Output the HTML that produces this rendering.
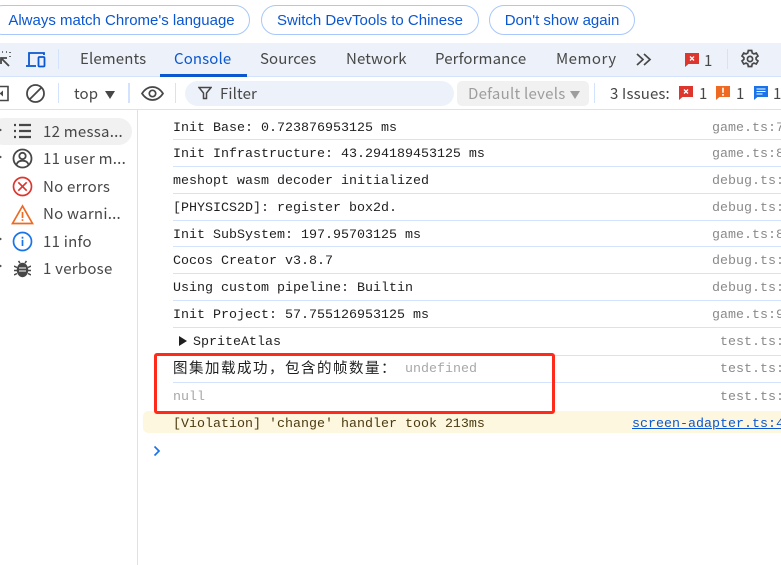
<!DOCTYPE html>
<html><head><meta charset="utf-8"><style>
html,body{margin:0;padding:0;background:#fff}
#p{position:relative;width:781px;height:565px;overflow:hidden;background:#fff;font-family:"Noto Sans CJK SC","Liberation Sans",sans-serif;color:#474747}
#p div,#p span.a,#p svg{position:absolute}
.b{box-sizing:border-box;height:30px;top:5px;border:1px solid #a8c7fa;border-radius:15px;color:#0b57d0;font:15px/29px "Liberation Sans",sans-serif;text-align:center;white-space:nowrap}
.t{top:48px;font-size:15px;line-height:21px;white-space:nowrap;color:#474747;letter-spacing:.12px}
.s{left:43px;font-size:15px;line-height:20px;white-space:nowrap;color:#474747;letter-spacing:.25px;margin-top:1px}
.m{left:173px;font:13.33px/16px "Liberation Mono",monospace;color:#1f1f1f;white-space:nowrap;margin-top:2px}
.r{font:13.33px/16px "Liberation Mono",monospace;color:#8a8a8a;white-space:nowrap;margin-top:2px}
.l{left:173px;right:0;height:1px;background:#d3e3fd}
.v{width:1px;background:#d3e3fd}
</style></head><body><div id="p">
<div class="b" style="left:-12px;width:262px;padding-left:5px">Always match Chrome's language</div>
<div class="b" style="left:261px;width:218px">Switch DevTools to Chinese</div>
<div class="b" style="left:489px;width:146px">Don't show again</div>

<div style="left:0;top:43px;width:781px;height:33px;background:#edf2fa"></div>
<div style="left:0;top:76px;width:781px;height:1px;background:#d3e3fd"></div>
<div style="left:0;top:109px;width:781px;height:1px;background:#d3e3fd"></div>
<div style="left:137px;top:110px;width:1px;height:455px;background:#d3e3fd"></div>

<svg style="left:-4px;top:50px" width="16" height="18" viewBox="0 0 16 18" fill="none" stroke="#474747" stroke-width="1.6"><path d="M2 2h1M6 2h1M10 2h1M14 2v1M14 6v1"/><path d="M13 16L6 9M5 14V8h6" stroke-width="1.8"/></svg>
<svg style="left:25px;top:51px" width="21" height="17" viewBox="0 0 21 17" fill="none" stroke="#0b57d0" stroke-width="1.8"><path d="M4 14V2h15v2"/><path d="M1 15h10"/><rect x="13.5" y="6" width="6" height="9.500" rx="1"/></svg>
<div class="v" style="left:58px;top:49px;height:20px"></div>

<div class="t" style="left:80px">Elements</div>
<div class="t" style="left:174px;color:#0b57d0">Console</div>
<div style="left:160px;top:74px;width:87px;height:3px;background:#0b57d0"></div>
<div class="t" style="left:260px">Sources</div>
<div class="t" style="left:346px">Network</div>
<div class="t" style="left:435px">Performance</div>
<div class="t" style="left:556px;letter-spacing:.5px">Memory</div>
<svg style="left:635px;top:52px" width="18" height="15" viewBox="0 0 18 15" fill="none" stroke="#474747" stroke-width="1.7"><path d="M2 2l6 5.500-6 5.500M9 2l6 5.500-6 5.500"/></svg>

<svg style="left:685px;top:53px" width="14" height="14" viewBox="0 0 14 14"><path d="M0 0h14v11H3.500L0 14z" fill="#dc362e"/><path d="M5 3.500l4 4M9 3.500l-4 4" stroke="#fff" stroke-width="1.3"/></svg>
<div class="t" style="left:704px;top:50px;color:#474747">1</div>
<div class="v" style="left:727px;top:49px;height:20px"></div>
<svg style="left:740px;top:49px" width="20" height="20" viewBox="0 0 20 20" fill="none" stroke="#474747" stroke-width="1.700"><path d="M8.300 1.500h3.400l.5 2.500 1.700.9 2.400-.9 1.700 3-1.900 1.600v1.800l1.900 1.600-1.700 3-2.400-.9-1.700.9-.5 2.500H8.300l-.5-2.500-1.700-.9-2.400.9-1.700-3 1.900-1.600V8.600L2 7l1.700-3 2.400.9 1.700-.9z"/><circle cx="10" cy="10" r="2.600"/></svg>

<svg style="left:-4px;top:85px" width="14" height="17" viewBox="0 0 14 17" fill="none" stroke="#474747" stroke-width="1.600"><path d="M0 1.500h12v14H0"/><path d="M7 5.500v6l-3.500-3z" fill="#474747" stroke="none"/></svg>
<svg style="left:25px;top:83px" width="21" height="21" viewBox="0 0 21 21" fill="none" stroke="#474747" stroke-width="1.800"><circle cx="10.500" cy="10.500" r="8.500"/><path d="M4.500 16.500l12-12"/></svg>
<div class="v" style="left:58px;top:83px;height:20px"></div>
<div class="t" style="left:74px;top:83px">top</div>
<svg style="left:105px;top:91px" width="10" height="8" viewBox="0 0 10 8"><path d="M0 0h10L5 8z" fill="#474747"/></svg>
<div class="v" style="left:128px;top:83px;height:20px;width:2px"></div>
<svg style="left:141px;top:85px" width="23" height="17" viewBox="0 0 23 17" fill="none" stroke="#474747" stroke-width="1.700"><path d="M1 8.500C4 4 7.500 2 11.500 2s7.500 2 10.500 6.500C19 13 15.500 15 11.500 15S4 13 1 8.500z"/><circle cx="11.500" cy="8.500" r="3.200"/></svg>
<div class="v" style="left:175px;top:83px;height:20px"></div>

<div style="left:185px;top:81px;width:269px;height:25px;border-radius:13px;background:#edf2fa"></div>
<svg style="left:198px;top:86px" width="14" height="14" viewBox="0 0 14 14" fill="none" stroke="#474747" stroke-width="1.500"><path d="M1 1.500h12L8.500 7v5.500h-3V7z"/></svg>
<div class="t" style="left:220px;top:83px">Filter</div>

<div style="left:457px;top:81px;width:132px;height:25px;border-radius:5px;background:#f1f1f1"></div>
<div class="t" style="left:468px;top:83px;color:#9d9d9d;letter-spacing:.25px">Default levels</div>
<svg style="left:570px;top:91px" width="10" height="8" viewBox="0 0 10 8"><path d="M0 0h10L5 8z" fill="#9d9d9d"/></svg>
<div class="v" style="left:594px;top:83px;height:20px"></div>

<div class="t" style="left:610px;top:83px">3 Issues:</div>
<svg style="left:679px;top:86px" width="14" height="14" viewBox="0 0 14 14"><path d="M0 0h14v11H3.500L0 14z" fill="#dc362e"/><path d="M5 3.500l4 4M9 3.500l-4 4" stroke="#fff" stroke-width="1.300"/></svg>
<div class="t" style="left:699px;top:83px">1</div>
<svg style="left:716px;top:86px" width="14" height="14" viewBox="0 0 14 14"><path d="M0 0h14v11H3.500L0 14z" fill="#ee6a22"/><path d="M7 1.800v5M7 8v1.700" stroke="#fff" stroke-width="1.600"/></svg>
<div class="t" style="left:736px;top:83px">1</div>
<svg style="left:754px;top:86px" width="14" height="14" viewBox="0 0 14 14"><path d="M0 0h14v11H3.500L0 14z" fill="#1a73e8"/><path d="M2.500 3h9M2.500 5.500h9M2.500 8h6" stroke="#fff" stroke-width="1"/></svg>
<div class="t" style="left:773px;top:83px">1</div>

<div style="left:-10px;top:118px;width:142px;height:27px;border-radius:14px;background:#f1f1f1"></div>
<svg style="left:13px;top:123px" width="19" height="16" viewBox="0 0 19 16" fill="none" stroke="#474747" stroke-width="2.200"><path d="M1 2h2M6 2h12M1 8h2M6 8h12M1 14h2M6 14h12"/></svg>
<div class="s" style="top:121px">12 messa...</div>
<svg style="left:12px;top:148px" width="21" height="21" viewBox="0 0 21 21" fill="none" stroke="#474747" stroke-width="1.800"><circle cx="10.500" cy="10.500" r="9"/><circle cx="10.500" cy="8" r="3.200"/><path d="M4.500 16.500c1-3 3.500-3.800 6-3.800s5 .8 6 3.800"/></svg>
<div class="s" style="top:148px">11 user m...</div>
<svg style="left:12px;top:176px" width="21" height="21" viewBox="0 0 21 21" fill="none" stroke="#dc362e" stroke-width="1.700"><circle cx="10.500" cy="10.500" r="9"/><path d="M6.300 6.300l8.400 8.400M14.700 6.300l-8.400 8.400"/></svg>
<div class="s" style="top:176px">No errors</div>
<svg style="left:11px;top:204px" width="23" height="21" viewBox="0 0 23 21" fill="none" stroke="#ee6a22" stroke-width="1.700"><path d="M11.500 2L1.500 19.500h20z"/><path d="M11.500 8v6M11.500 15.200v1.700"/></svg>
<div class="s" style="top:203px">No warni...</div>
<svg style="left:12px;top:231px" width="21" height="21" viewBox="0 0 21 21" fill="none" stroke="#1a73e8" stroke-width="1.700"><circle cx="10.500" cy="10.500" r="9"/><path d="M10.500 9v6M10.500 5.800v1.800"/></svg>
<div class="s" style="top:231px">11 info</div>
<svg style="left:14px;top:258px" width="17" height="20" viewBox="0 0 17 20" fill="none" stroke="#474747" stroke-width="1.500"><path d="M4.500 3l1.500 2M12.500 3L11 5M0 8l3 1.500M17 8l-3 1.500M0 12.500h3M17 12.500h-3M0 17l3-1.500M17 17l-3-1.500"/><ellipse cx="8.500" cy="12" rx="5" ry="6.500" fill="#474747"/><path d="M5 10h7M5 13h7" stroke="#fff" stroke-width="1"/></svg>
<div class="s" style="top:258px">1 verbose</div>
<svg style="left:-1px;top:128px" width="4" height="150" viewBox="0 0 4 150" fill="#474747"><path d="M0 0l3 2-3 2zM0 27l3 2-3 2zM0 109l3 2-3 2zM0 136l3 2-3 2z"/></svg>

<div class="m" style="top:119px">Init Base: 0.723876953125 ms</div><div class="r" style="left:712px;top:119px">game.ts:7</div>
<div class="l" style="top:139px"></div>
<div class="m" style="top:145px">Init Infrastructure: 43.294189453125 ms</div><div class="r" style="left:712px;top:145px">game.ts:8</div>
<div class="l" style="top:166px"></div>
<div class="m" style="top:172px">meshopt wasm decoder initialized</div><div class="r" style="left:712px;top:172px">debug.ts:</div>
<div class="l" style="top:193px"></div>
<div class="m" style="top:199px">[PHYSICS2D]: register box2d.</div><div class="r" style="left:712px;top:199px">debug.ts:</div>
<div class="l" style="top:220px"></div>
<div class="m" style="top:226px">Init SubSystem: 197.95703125 ms</div><div class="r" style="left:712px;top:226px">game.ts:8</div>
<div class="l" style="top:246px"></div>
<div class="m" style="top:252px">Cocos Creator v3.8.7</div><div class="r" style="left:712px;top:252px">debug.ts:</div>
<div class="l" style="top:273px"></div>
<div class="m" style="top:279px">Using custom pipeline: Builtin</div><div class="r" style="left:712px;top:279px">debug.ts:</div>
<div class="l" style="top:300px"></div>
<div class="m" style="top:306px">Init Project: 57.755126953125 ms</div><div class="r" style="left:712px;top:306px">game.ts:9</div>
<div class="l" style="top:327px"></div>
<svg style="left:179px;top:336px" width="8" height="10" viewBox="0 0 8 10"><path d="M0 0l8 5-8 5z" fill="#1f1f1f"/></svg>
<div class="m" style="left:193px;top:333px">SpriteAtlas</div><div class="r" style="left:720px;top:333px">test.ts:</div>
<div class="l" style="top:355px"></div>
<div class="m" style="left:173px;top:360px;font-family:'Liberation Mono','Noto Sans CJK SC',monospace;font-size:14.5px;letter-spacing:1.5px;font-weight:400">图集加载成功，包含的帧数量：</div>
<div class="m" style="left:405px;top:360px;color:#a8a8a8">undefined</div><div class="r" style="left:720px;top:360px">test.ts:</div>
<div class="l" style="top:382px"></div>
<div class="m" style="top:388px;color:#a8a8a8">null</div><div class="r" style="left:720px;top:388px">test.ts:</div>

<div style="left:143px;top:411px;width:638px;height:22px;background:#fef7e0;border-radius:5px 0 0 5px"></div>
<div class="m" style="top:415px;color:#4a3a10">[Violation] 'change' handler took 213ms</div>
<div class="r" style="left:632px;top:415px;color:#0b57d0;text-decoration:underline">screen-adapter.ts:4</div>
<svg style="left:153px;top:445px" width="8" height="12" viewBox="0 0 8 12" fill="none" stroke="#1a73e8" stroke-width="1.700"><path d="M1.500 1.500L6 6l-4.500 4.500"/></svg>

<div style="box-sizing:border-box;left:154px;top:353px;width:401px;height:61px;border:3.500px solid #fe2a1a;border-radius:3px"></div>
</div></body></html>
